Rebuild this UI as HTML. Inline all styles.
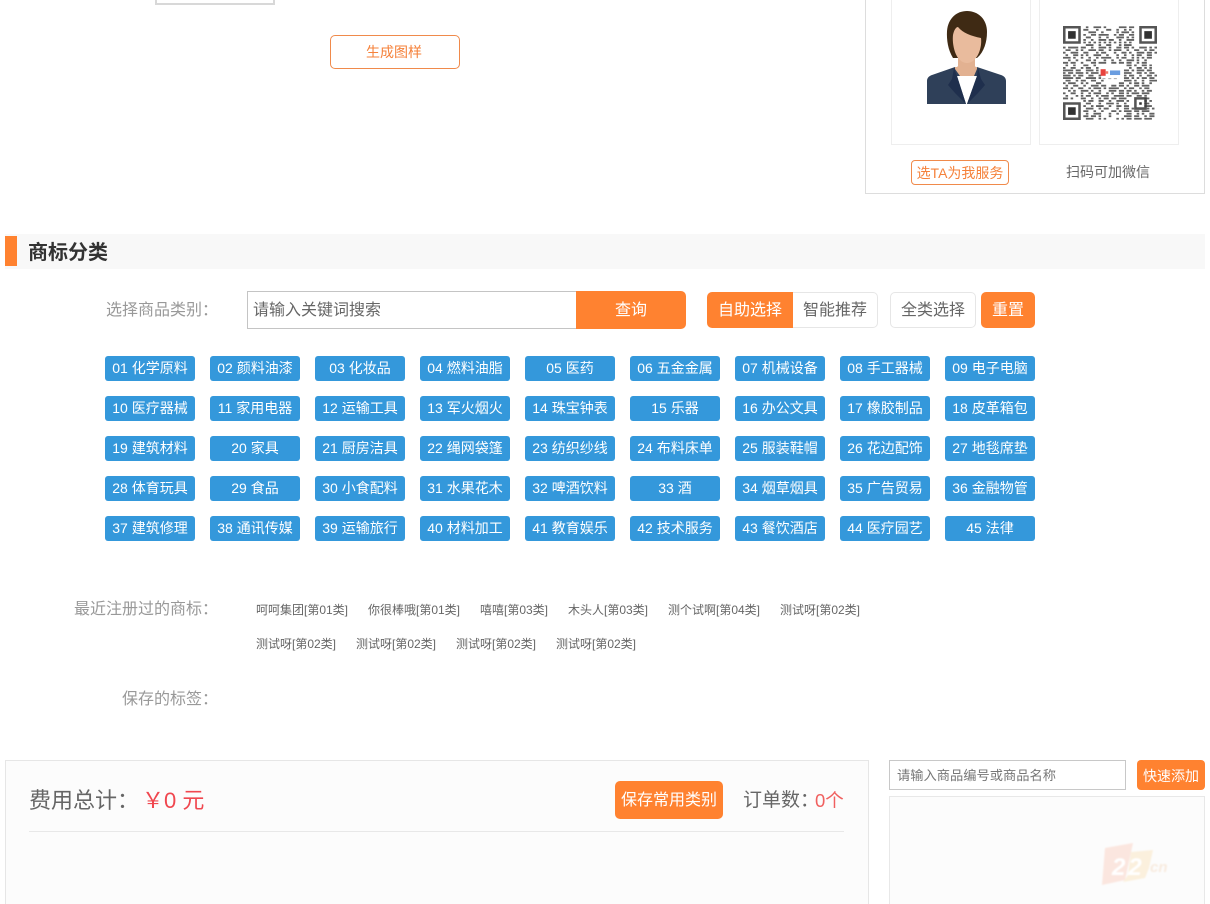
<!DOCTYPE html>
<html lang="zh-CN">
<head>
<meta charset="utf-8">
<title>商标分类</title>
<style>
*{box-sizing:border-box;margin:0;padding:0}
html,body{width:1210px;height:904px;overflow:hidden;background:#fff}
body{position:relative;font-family:"Liberation Sans","Noto Sans CJK SC",sans-serif;color:#666}
.a{position:absolute;white-space:nowrap}
.c{text-align:center}
.or{background:#ff8230;color:#fff;text-align:center}
.t{position:absolute;width:90px;height:25px;line-height:24px;background:#3498db;color:#fff;font-size:14px;text-align:center;border-radius:3px;white-space:nowrap}
.r{position:absolute;font-size:12px;color:#666;line-height:16px;white-space:nowrap}
.lb{position:absolute;right:992px;font-size:16px;color:#999;line-height:20px;white-space:nowrap}
</style>
</head>
<body>
<div class="a" style="left:155px;top:-20px;width:120px;height:25px;border:2px solid #d8d8d8;background:#fff"></div>
<div class="a c" style="left:330px;top:35px;width:130px;height:34px;border:1px solid #f08a4b;border-radius:5px;color:#f5813a;font-size:14px;line-height:32px;padding-right:2px">生成图样</div>

<div class="a" style="left:865px;top:-20px;width:340px;height:214px;border:1px solid #ddd"></div>
<div class="a" style="left:891px;top:-20px;width:140px;height:165px;border:1px solid #eee"></div>
<div class="a" style="left:1039px;top:-20px;width:140px;height:165px;border:1px solid #eee"></div>

<svg class="a" style="left:915px;top:0" width="100" height="115" viewBox="0 0 100 115">
<path d="M38 58C33 50 31.500 40 32 31C33 18 42 11 52 11C63 11 72 19 72 32C72 42 69 52 62 58Z" fill="#3f2a14"/>
<path d="M43 55V66L40 69V76H62V69L60 66V55Z" fill="#e2b191"/>
<path d="M38 35C39 30 41 27 43 27C48 33 56 36 66 38C67 46 64 56 59 60C55 64 49 64 45 60C40 56 37 44 38 35Z" fill="#e9bb9d"/>
<path d="M12 104V81C12 78 14 76 17 75L40 67L51 78L62 67L86 75C89 76 91 78 91 81V104Z" fill="#2f4059"/>
<path d="M40 69L45 76H59L62 69L62 67H40Z" fill="#e2b191"/>
<path d="M42 76H62L52 104H51Z" fill="#fff"/>
<path d="M39 68L42 76L51 104L40 93L33 85L37 79Z" fill="#1f2f4d"/>
<path d="M63 68L62 76L52 104L63 93L70 85L66 79Z" fill="#1f2f4d"/>
</svg>

<svg class="a" style="left:1063px;top:26px" width="94" height="94" viewBox="0 0 37 37">
<defs><filter id="b" x="-5%" y="-5%" width="110%" height="110%"><feGaussianBlur stdDeviation=".13"/></filter></defs>
<g filter="url(#b)">
<g fill="#555">
<path fill-rule="evenodd" d="M0 0h7v7H0zM1 1v5h5V1zM30 0h7v7h-7zM31 1v5h5V1zM0 30h7v7H0zM1 31v5h5v-5zM28 28h5v5h-5zM29 29v3h3v-3z"/>
</g>
<g fill="#333">
<path d="M2 2h3v3H2zM32 2h3v3h-3zM2 32h3v3H2zM30 30h1v1h-1z"/>
</g>
<g stroke="#3c3c3c" stroke-width=".72" fill="none" transform="translate(0 .5)" opacity=".8">
<path d="M9 0h1m2 0h3m1 0h1m5 0h3m1 0h2"/>
<path d="M8 1h2m3 0h1m3 0h2m2 0h1m2 0h1m1 0h1"/>
<path d="M10 2h3m2 0h1m5 0h1m1 0h3m1 0h1"/>
<path d="M8 3h1m2 0h2m1 0h4m2 0h1m1 0h2m2 0h2"/>
<path d="M9 4h2m3 0h1m2 0h1m3 0h3m1 0h1m1 0h1"/>
<path d="M8 5h1m2 0h1m2 0h3m1 0h2m2 0h1m2 0h3"/>
<path d="M8 6h1m1 0h1m1 0h1m1 0h1m1 0h1m1 0h1m1 0h1m1 0h1m1 0h1m1 0h1"/>
<path d="M9 7h3m2 0h1m2 0h2m3 0h1m1 0h3"/>
<path d="M0 8h1m1 0h4m1 0h2m2 0h1m2 0h3m1 0h1m2 0h2m1 0h2m1 0h1m2 0h3m1 0h1m1 0h2"/>
<path d="M1 9h2m2 0h1m1 0h1m2 0h3m1 0h2m2 0h1m1 0h3m2 0h1m2 0h2m2 0h1m1 0h2"/>
<path d="M0 10h1m2 0h3m2 0h2m3 0h1m1 0h2m3 0h1m2 0h2m1 0h1m2 0h3m1 0h2m1 0h1"/>
<path d="M1 11h1m2 0h2m1 0h1m1 0h1m2 0h3m2 0h1m3 0h1m2 0h1m2 0h1m1 0h2m2 0h2"/>
<path d="M0 12h3m1 0h1m2 0h1m2 0h1m2 0h1m1 0h4m2 0h1m1 0h2m2 0h1m1 0h1m1 0h1m1 0h2"/>
<path d="M2 13h1m2 0h1m3 0h2m1 0h1m3 0h1m2 0h1m2 0h1m2 0h3m1 0h1m2 0h1"/>
<path d="M0 14h2m1 0h2m2 0h1m3 0h2m1 0h3m2 0h2m1 0h2m1 0h2m2 0h1m1 0h2"/>
<path d="M1 15h1m2 0h1m3 0h2m2 0h1m12 0h2m1 0h1m2 0h2m1 0h1"/>
<path d="M0 16h1m2 0h2m2 0h1m1 0h2m2 0h1m12 0h1m2 0h2m1 0h1m1 0h1"/>
<path d="M0 17h4m1 0h2m2 0h3m1 0h1m10 0h2m1 0h1m1 0h3m1 0h2"/>
<path d="M0 18h1m1 0h2m1 0h3m1 0h1m1 0h3m10 0h3m2 0h2m1 0h1m1 0h2"/>
<path d="M0 19h3m1 0h1m1 0h2m2 0h2m2 0h1m9 0h1m1 0h2m2 0h1m2 0h2m1 0h1"/>
<path d="M0 20h4m1 0h2m2 0h4m1 0h1m9 0h2m1 0h1m1 0h1m1 0h2m1 0h2"/>
<path d="M1 21h2m2 0h1m1 0h2m2 0h2m2 0h1m8 0h3m1 0h1m2 0h1m2 0h3"/>
<path d="M0 22h1m1 0h3m2 0h1m1 0h1m3 0h2m7 0h2m2 0h1m1 0h2m1 0h1m2 0h1"/>
<path d="M1 23h1m2 0h2m2 0h1m2 0h3m1 0h2m2 0h2m1 0h2m1 0h1m2 0h2m1 0h3"/>
<path d="M0 24h2m1 0h1m2 0h2m2 0h1m1 0h3m1 0h1m1 0h4m2 0h1m1 0h2m2 0h1m1 0h2"/>
<path d="M2 25h1m1 0h1m2 0h3m1 0h1m2 0h1m3 0h3m1 0h2m1 0h2m1 0h1m2 0h1m1 0h2"/>
<path d="M0 26h1m2 0h2m2 0h1m2 0h1m1 0h3m2 0h1m1 0h1m2 0h2m1 0h1m1 0h3m1 0h3"/>
<path d="M1 27h1m3 0h1m1 0h1m1 0h2m2 0h1m1 0h3m2 0h4m1 0h2m2 0h2m1 0h1"/>
<path d="M0 28h2m1 0h1m3 0h2m2 0h1m2 0h1m1 0h2m1 0h2m1 0h3m7 0h2"/>
<path d="M8 29h1m1 0h2m2 0h2m2 0h1m2 0h3m1 0h1m6 0h1m1 0h1"/>
<path d="M9 30h2m3 0h1m2 0h3m1 0h1m2 0h1m7 0h2"/>
<path d="M8 31h1m2 0h1m1 0h3m2 0h1m2 0h2m1 0h2m6 0h3"/>
<path d="M9 32h3m2 0h1m1 0h2m3 0h1m2 0h2m1 0h1m5 0h1m1 0h1"/>
<path d="M8 33h2m2 0h1m2 0h1m3 0h2m1 0h1m1 0h3m1 0h2m1 0h3"/>
<path d="M9 34h1m2 0h3m3 0h1m2 0h1m3 0h2m2 0h1m1 0h1m2 0h2"/>
<path d="M8 35h2m1 0h2m1 0h1m3 0h1m5 0h3m1 0h2m2 0h1m1 0h2"/>
<path d="M9 36h3m2 0h1m1 0h1m4 0h1m1 0h1m1 0h2m1 0h3m1 0h3"/>
</g>
<path d="M14.800 17h2v2.600h-2z" fill="#e8433d"/>
<path d="M16.800 17.800h1v1h-1z" fill="#ee7d6b"/>
<path d="M18.500 17.500h4v1.800h-4z" fill="#6a9de0"/>
<path d="M15.500 20.500h1.200v.4h-1.200zM17.800 20.500h1.200v.4h-1.200zM20 20.500h1.200v.4H20z" fill="#aaa"/>
</g>
</svg>

<div class="a c" style="left:911px;top:160px;width:98px;height:25px;border:1px solid #f08a4b;border-radius:4px;color:#f5813a;font-size:14px;line-height:24px">选TA为我服务</div>
<div class="a c" style="left:1038px;top:162px;width:140px;color:#666;font-size:14px;line-height:20px">扫码可加微信</div>

<div class="a" style="left:5px;top:234px;width:1200px;height:35px;background:#f8f8f8"></div>
<div class="a" style="left:5px;top:236px;width:12px;height:30px;background:#ff8230"></div>
<div class="a" style="left:28px;top:239px;font-size:20px;font-weight:bold;color:#333;line-height:28px">商标分类</div>

<div class="lb" style="top:301px">选择商品类别：</div>
<div class="a" style="left:247px;top:291px;width:330px;height:38px;border:1px solid #c4c4c4;font-size:16px;color:#666;line-height:38px;padding-left:5px">请输入关键词搜索</div>
<div class="a or" style="left:576px;top:291px;width:110px;height:38px;font-size:16px;line-height:40px;border-radius:0 5px 5px 0">查询</div>
<div class="a or" style="left:707px;top:292px;width:86px;height:36px;font-size:16px;line-height:38px;border-radius:5px 0 0 5px">自助选择</div>
<div class="a c" style="left:793px;top:292px;width:85px;height:36px;font-size:16px;line-height:36px;border:1px solid #e6e6e6;border-left:0;border-radius:0 5px 5px 0;color:#666">智能推荐</div>
<div class="a c" style="left:890px;top:292px;width:86px;height:36px;font-size:16px;line-height:36px;border:1px solid #e6e6e6;border-radius:5px;color:#666">全类选择</div>
<div class="a or" style="left:981px;top:292px;width:54px;height:36px;font-size:16px;line-height:38px;border-radius:5px">重置</div>

<div class="t" style="left:105px;top:356px">01 化学原料</div>
<div class="t" style="left:210px;top:356px">02 颜料油漆</div>
<div class="t" style="left:315px;top:356px">03 化妆品</div>
<div class="t" style="left:420px;top:356px">04 燃料油脂</div>
<div class="t" style="left:525px;top:356px">05 医药</div>
<div class="t" style="left:630px;top:356px">06 五金金属</div>
<div class="t" style="left:735px;top:356px">07 机械设备</div>
<div class="t" style="left:840px;top:356px">08 手工器械</div>
<div class="t" style="left:945px;top:356px">09 电子电脑</div>
<div class="t" style="left:105px;top:396px">10 医疗器械</div>
<div class="t" style="left:210px;top:396px">11 家用电器</div>
<div class="t" style="left:315px;top:396px">12 运输工具</div>
<div class="t" style="left:420px;top:396px">13 军火烟火</div>
<div class="t" style="left:525px;top:396px">14 珠宝钟表</div>
<div class="t" style="left:630px;top:396px">15 乐器</div>
<div class="t" style="left:735px;top:396px">16 办公文具</div>
<div class="t" style="left:840px;top:396px">17 橡胶制品</div>
<div class="t" style="left:945px;top:396px">18 皮革箱包</div>
<div class="t" style="left:105px;top:436px">19 建筑材料</div>
<div class="t" style="left:210px;top:436px">20 家具</div>
<div class="t" style="left:315px;top:436px">21 厨房洁具</div>
<div class="t" style="left:420px;top:436px">22 绳网袋篷</div>
<div class="t" style="left:525px;top:436px">23 纺织纱线</div>
<div class="t" style="left:630px;top:436px">24 布料床单</div>
<div class="t" style="left:735px;top:436px">25 服装鞋帽</div>
<div class="t" style="left:840px;top:436px">26 花边配饰</div>
<div class="t" style="left:945px;top:436px">27 地毯席垫</div>
<div class="t" style="left:105px;top:476px">28 体育玩具</div>
<div class="t" style="left:210px;top:476px">29 食品</div>
<div class="t" style="left:315px;top:476px">30 小食配料</div>
<div class="t" style="left:420px;top:476px">31 水果花木</div>
<div class="t" style="left:525px;top:476px">32 啤酒饮料</div>
<div class="t" style="left:630px;top:476px">33 酒</div>
<div class="t" style="left:735px;top:476px">34 烟草烟具</div>
<div class="t" style="left:840px;top:476px">35 广告贸易</div>
<div class="t" style="left:945px;top:476px">36 金融物管</div>
<div class="t" style="left:105px;top:516px">37 建筑修理</div>
<div class="t" style="left:210px;top:516px">38 通讯传媒</div>
<div class="t" style="left:315px;top:516px">39 运输旅行</div>
<div class="t" style="left:420px;top:516px">40 材料加工</div>
<div class="t" style="left:525px;top:516px">41 教育娱乐</div>
<div class="t" style="left:630px;top:516px">42 技术服务</div>
<div class="t" style="left:735px;top:516px">43 餐饮酒店</div>
<div class="t" style="left:840px;top:516px">44 医疗园艺</div>
<div class="t" style="left:945px;top:516px">45 法律</div>

<div class="lb" style="top:600px">最近注册过的商标：</div>
<div class="r" style="left:256px;top:602px">呵呵集团[第01类]</div>
<div class="r" style="left:368px;top:602px">你很棒哦[第01类]</div>
<div class="r" style="left:480px;top:602px">嘻嘻[第03类]</div>
<div class="r" style="left:568px;top:602px">木头人[第03类]</div>
<div class="r" style="left:668px;top:602px">测个试啊[第04类]</div>
<div class="r" style="left:780px;top:602px">测试呀[第02类]</div>
<div class="r" style="left:256px;top:636px">测试呀[第02类]</div>
<div class="r" style="left:356px;top:636px">测试呀[第02类]</div>
<div class="r" style="left:456px;top:636px">测试呀[第02类]</div>
<div class="r" style="left:556px;top:636px">测试呀[第02类]</div>
<div class="lb" style="top:690px">保存的标签：</div>

<div class="a" style="left:5px;top:760px;width:864px;height:160px;background:#fcfcfc;border:1px solid #e6e6e6"></div>
<div class="a" style="left:29px;top:785px;font-size:22px;line-height:31px;color:#666">费用总计：</div>
<div class="a" style="left:142px;top:785px;font-size:22px;line-height:31px;color:#f0474f">￥0 元</div>
<div class="a or" style="left:615px;top:781px;width:108px;height:38px;font-size:16px;line-height:40px;border-radius:5px">保存常用类别</div>
<div class="a" style="left:743px;top:787px;font-size:19px;line-height:28px;color:#666">订单数：</div>
<div class="a" style="left:815px;top:787px;font-size:18.500px;line-height:28px;color:#f0605f">0个</div>
<div class="a" style="left:29px;top:831px;width:815px;height:1px;background:#e8e8e8"></div>

<div class="a" style="left:889px;top:760px;width:237px;height:30px;border:1px solid #c8c8c8;font-size:13.250px;line-height:30px;padding-left:7px;color:#777">请输入商品编号或商品名称</div>
<div class="a or" style="left:1137px;top:760px;width:68px;height:30px;font-size:14px;line-height:32px;border-radius:4px">快速添加</div>
<div class="a" style="left:889px;top:796px;width:316px;height:130px;background:#fcfcfc;border:1px solid #e8e8e8"></div>

<svg class="a" style="left:1095px;top:840px" width="80" height="55" viewBox="0 0 80 55">
<defs><filter id="w" x="-10%" y="-10%" width="120%" height="120%"><feGaussianBlur stdDeviation=".7"/></filter></defs>
<g filter="url(#w)">
<path d="M10 8L38 3L30 40L7 45Z" fill="#fbe6df"/>
<path d="M36 12L58 10L54 28L50 38L28 42L33 35Z" fill="#fbf0dd"/>
<text x="17" y="35" font-family="Liberation Sans" font-size="24" font-weight="bold" font-style="italic" letter-spacing="3" fill="#fff">22</text>
<text x="55" y="32" font-family="Liberation Sans" font-size="15" font-weight="bold" font-style="italic" fill="#f8ebdf">cn</text>
</g>
</svg>
</body>
</html>
